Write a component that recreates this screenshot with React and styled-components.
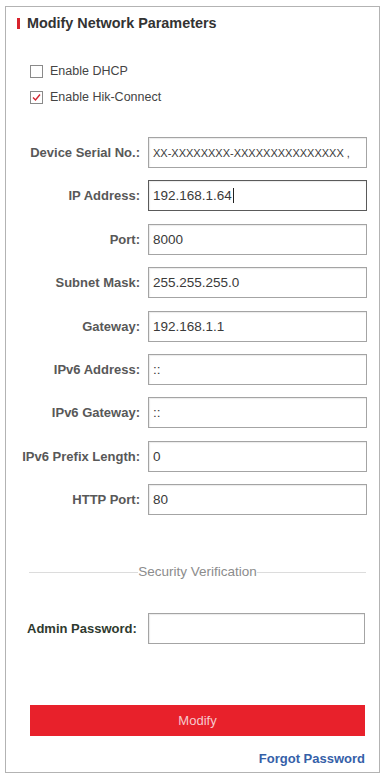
import React from 'react'
import styled, { createGlobalStyle } from 'styled-components'

const GlobalStyle = createGlobalStyle`
  html, body {
    margin: 0;
    padding: 0;
    background: #fff;
  }
  body {
    font-family: "Liberation Sans", Arial, sans-serif;
  }
`

const Page = styled.div`
  padding: 6px 4px 0 5px;
`

const Frame = styled.div`
  box-sizing: border-box;
  width: 375px;
  height: 767px;
  border: 1px solid #b3b3b3;
  background: #fff;
  display: flex;
  flex-direction: column;
`

const TitleRow = styled.div`
  display: flex;
  align-items: center;
  gap: 7px;
  padding: 8px 0 0 11px;
  height: 16px;
`

const RedMark = styled.span`
  width: 3px;
  height: 11px;
  background: #d8232d;
`

const Title = styled.h1`
  margin: 0;
  font-size: 14.4px;
  font-weight: bold;
  color: #333;
  line-height: 16px;
`

const Checks = styled.div`
  display: flex;
  flex-direction: column;
  gap: 8px;
  margin: 31px 0 0 24px;
`

const CheckRow = styled.label`
  display: flex;
  align-items: center;
  gap: 7px;
  height: 18px;
  font-size: 12.5px;
  color: #444;
`

const Box = styled.span`
  box-sizing: border-box;
  width: 13px;
  height: 13px;
  border: 1px solid #8a8a8a;
  background: #fff;
  display: flex;
  align-items: center;
  justify-content: center;
`

const Form = styled.div`
  display: grid;
  grid-template-columns: 134px 219px;
  column-gap: 8px;
  row-gap: 12.4px;
  margin-top: 31px;
  align-items: center;
`

const Label = styled.div`
  text-align: right;
  font-size: 13px;
  font-weight: bold;
  color: ${p => (p.$dark ? '#2f3a2f' : '#585858')};
  white-space: nowrap;
`

const Field = styled.div`
  box-sizing: border-box;
  height: 31px;
  border: 1px solid ${p => (p.$active ? '#5a5a5a' : '#a4a4a4')};
  box-shadow: inset 1px 1px 1px rgba(0, 0, 0, 0.08);
  padding: 0 4px;
  display: flex;
  align-items: center;
  font-size: ${p => (p.$small ? '11px' : '13.5px')};
  color: #3a3a3a;
  overflow: hidden;
  white-space: nowrap;
`

const Caret = styled.span`
  display: inline-block;
  width: 1px;
  height: 15px;
  background: #222;
  margin-left: 1px;
`

const Divider = styled.div`
  display: flex;
  align-items: center;
  margin: 49px 13px 0 23px;
  font-size: 13.5px;
  color: #8c8c8c;
  line-height: 16px;
  &::before,
  &::after {
    content: '';
    flex: 1;
    height: 1px;
    background: #dcdcdc;
  }
`

const AdminRow = styled(Form)`
  grid-template-columns: 134px 217px;
  margin-top: 33px;
`

const AdminLabel = styled(Label)`
  text-align: left;
  padding-left: 21px;
`

const Button = styled.button`
  margin: 61px 14px 0 24px;
  height: 31px;
  border: none;
  background: #e8212b;
  color: #f6c9cb;
  font-family: inherit;
  font-size: 13px;
`

const Forgot = styled.a`
  align-self: flex-end;
  margin: 15px 14px 0 0;
  font-size: 13px;
  line-height: 16px;
  font-weight: bold;
  color: #3560a8;
  text-decoration: none;
`

const fields = [
  { label: 'Device Serial No.:', value: 'XX-XXXXXXXX-XXXXXXXXXXXXXXX ,', small: true },
  { label: 'IP Address:', value: '192.168.1.64', active: true },
  { label: 'Port:', value: '8000' },
  { label: 'Subnet Mask:', value: '255.255.255.0' },
  { label: 'Gateway:', value: '192.168.1.1' },
  { label: 'IPv6 Address:', value: '::' },
  { label: 'IPv6 Gateway:', value: '::' },
  { label: 'IPv6 Prefix Length:', value: '0' },
  { label: 'HTTP Port:', value: '80' },
]

const Check = ({ checked, children }) => (
  <CheckRow>
    <Box>
      {checked && (
        <svg width="9" height="9" viewBox="0 0 9 9">
          <path d="M1 4.5 L3.5 7 L8 1.5" fill="none" stroke="#d32430" strokeWidth="1.4" />
        </svg>
      )}
    </Box>
    {children}
  </CheckRow>
)

const App = () => {
  return (
    <Page>
      <GlobalStyle />
      <Frame>
        <TitleRow>
          <RedMark />
          <Title>Modify Network Parameters</Title>
        </TitleRow>
        <Checks>
          <Check>Enable DHCP</Check>
          <Check checked>Enable Hik-Connect</Check>
        </Checks>
        <Form>
          {fields.map(f => (
            <React.Fragment key={f.label}>
              <Label>{f.label}</Label>
              <Field $active={f.active} $small={f.small}>
                {f.value}
                {f.active && <Caret />}
              </Field>
            </React.Fragment>
          ))}
        </Form>
        <Divider>Security Verification</Divider>
        <AdminRow>
          <AdminLabel $dark>Admin Password:</AdminLabel>
          <Field />
        </AdminRow>
        <Button>Modify</Button>
        <Forgot href="#">Forgot Password</Forgot>
      </Frame>
    </Page>
  )
}

export default App
